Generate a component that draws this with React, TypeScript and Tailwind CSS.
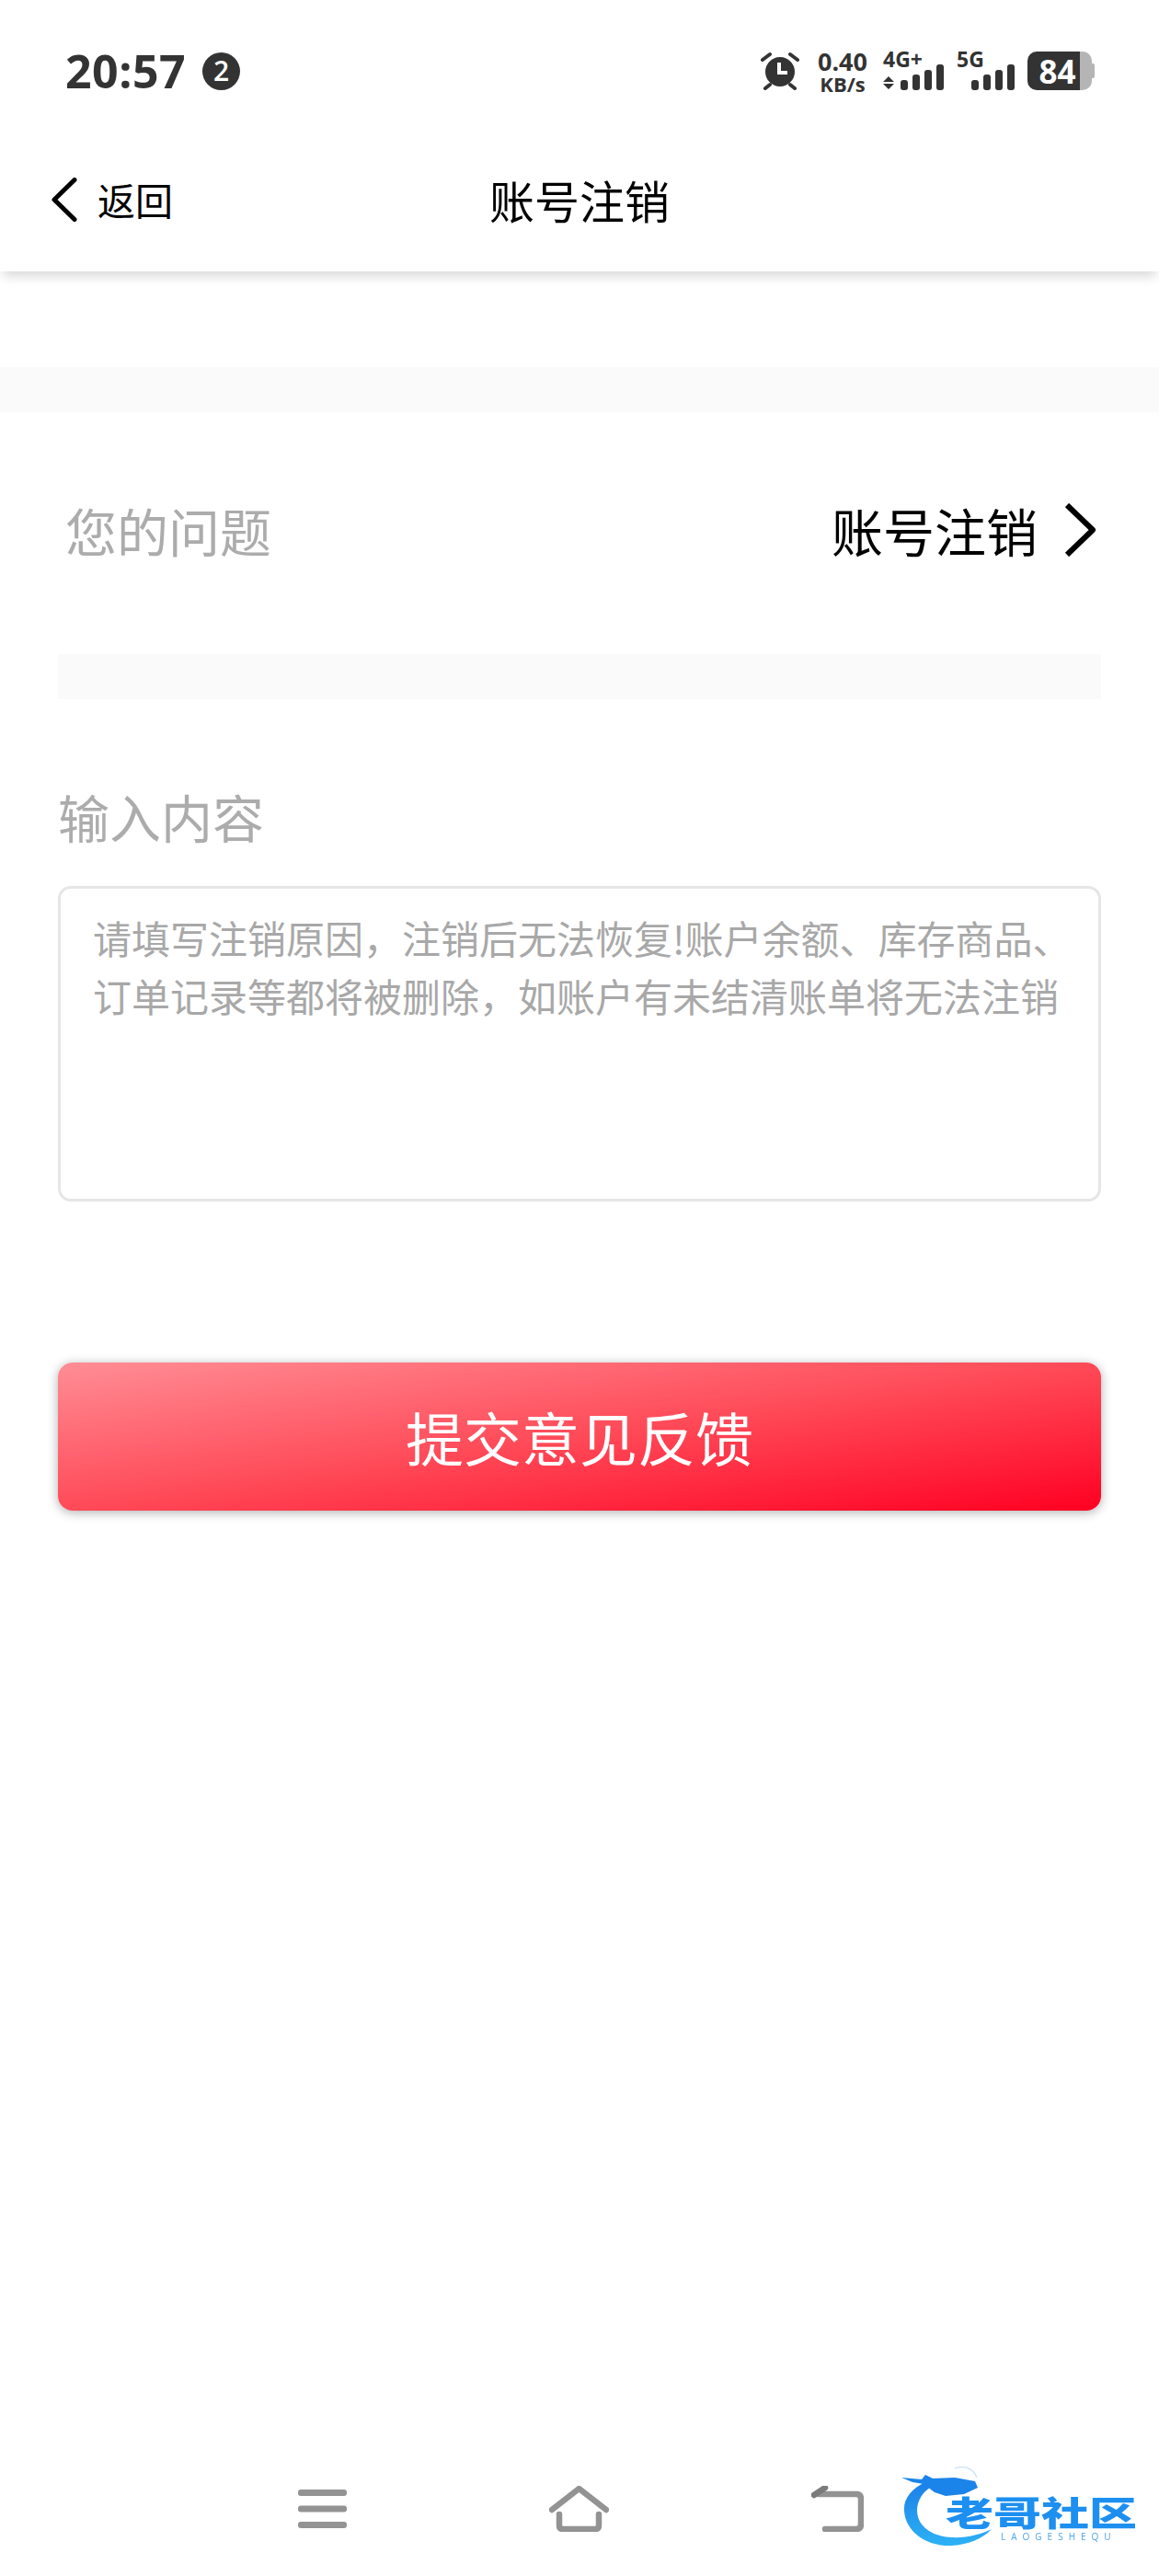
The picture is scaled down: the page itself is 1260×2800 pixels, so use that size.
const cjk = "font-['Noto_Sans_CJK_SC','Noto_Sans',sans-serif]";
const ui = "font-['Open_Sans','Noto_Sans',sans-serif]";

const AlarmIcon = () => (
  <svg width="44" height="42" viewBox="0 0 44 42" fill="none">
    <circle cx="22" cy="22" r="16" fill="#333" />
    <path d="M21 12v11h9" stroke="#fff" strokeWidth="4" />
    <path d="M3 9l8-6M41 9l-8-6M6 40l5-4M38 40l-5-4" stroke="#333" strokeWidth="4" strokeLinecap="round" />
  </svg>
);

const SignalBars = () => (
  <svg width="47" height="28" viewBox="0 0 47 28" fill="#333">
    <rect x="0" y="17" width="8" height="11" rx="3" />
    <rect x="13" y="11" width="8" height="17" rx="3" />
    <rect x="26" y="6" width="8" height="22" rx="3" />
    <rect x="39" y="0" width="8" height="28" rx="3" />
  </svg>
);

const ChevronLeft = () => (
  <svg width="28" height="48" viewBox="0 0 28 48" fill="none">
    <path d="M25 2.5L3 24l22 21.5" stroke="#000" strokeWidth="5" strokeLinecap="round" strokeLinejoin="round" />
  </svg>
);

const ChevronRight = () => (
  <svg width="36" height="58" viewBox="0 0 36 58" fill="none">
    <path d="M4 2l28 27L4 56" stroke="#000" strokeWidth="6" strokeLinejoin="round" />
  </svg>
);

const StatusBar = () => (
  <div className={`flex h-[154px] items-center justify-between pr-[70px] pl-[71px] text-[#333] ${ui}`}>
    <div className="flex items-center gap-[18px]">
      <span className="text-[50px] leading-none font-bold tracking-[0.5px]">20:57</span>
      <span className="flex h-[41px] w-[41px] items-center justify-center rounded-full bg-[#333] text-[30px] leading-none font-semibold text-white">
        2
      </span>
    </div>
    <div className="flex items-center">
      <AlarmIcon />
      <div className="ml-[16px] flex w-[60px] flex-col items-center font-bold">
        <span className="text-[27px] leading-[27px]">0.40</span>
        <span className="text-[22px] leading-[22px]">KB/s</span>
      </div>
      <div className="relative ml-[14px] flex h-[42px] w-[66px] items-end gap-[7px]">
        <span className="absolute top-[-1px] left-0 text-[23px] leading-[18px] font-bold">4G+</span>
        <svg width="12" height="14" viewBox="0 0 12 14" fill="#333" className="mb-[1px]">
          <path d="M6 0l6 6H0zM6 14L0 8h12z" />
        </svg>
        <SignalBars />
      </div>
      <div className="relative ml-[14px] flex h-[42px] w-[63px] items-end justify-end">
        <span className="absolute top-[-1px] left-0 text-[23px] leading-[18px] font-bold">5G</span>
        <SignalBars />
      </div>
      <div className="ml-[14px] flex items-center">
        <span className="flex h-[42px] w-[57px] items-center justify-center rounded-l-[10px] bg-[#333] pl-[8px] text-[35px] leading-none font-bold text-white">
          84
        </span>
        <div className="h-[42px] w-[13px] rounded-r-[10px] bg-[#b5b5b5]" />
        <div className="h-[16px] w-[3px] rounded-r-[2px] bg-[#b5b5b5]" />
      </div>
    </div>
  </div>
);

const NavBar = () => (
  <div className={`relative z-10 grid h-[141px] grid-cols-3 items-center bg-white pr-[56px] pb-[16px] pl-[56px] shadow-[0_9px_12px_-4px_rgba(0,0,0,0.16)] ${cjk}`}>
    <div className="flex items-center gap-[22px] text-[41px] leading-none text-black">
      <ChevronLeft />
      <span>返回</span>
    </div>
    <div className="w-full text-center text-[49px] leading-none text-black">账号注销</div>
    <div />
  </div>
);

const MenuIcon = () => (
  <svg width="53" height="50" viewBox="0 0 53 50" fill="#939393">
    <rect x="0" y="4" width="53" height="7" rx="3" />
    <rect x="0" y="21.5" width="53" height="7" rx="3" />
    <rect x="0" y="39" width="53" height="7" rx="3" />
  </svg>
);

const HomeIcon = () => (
  <svg width="65" height="50" viewBox="0 0 65 50" fill="none" stroke="#939393" strokeWidth="6.5" strokeLinecap="round" strokeLinejoin="round">
    <path d="M3 26L32.5 3 62 26" />
    <path d="M11 31v12q0 4 4 4h35q4 0 4-4V31" />
  </svg>
);

const BackIcon = () => (
  <svg width="57" height="50" viewBox="0 0 57 50" fill="none" strokeWidth="6.5" strokeLinecap="round" strokeLinejoin="round">
    <path d="M8 9h41q5 0 5 5v28q0 5-5 5H15" stroke="#939393" />
    <path d="M3 10l12-8" stroke="#7b7b7b" />
  </svg>
);

const Watermark = () => (
  <div className="absolute right-[22px] bottom-[27px] h-[100px] w-[260px] blur-[0.6px]">
    <svg width="112" height="100" viewBox="0 0 112 100" fill="none" className="absolute top-0 left-0">
      <defs>
        <linearGradient id="ring" x1="0" y1="0" x2="0" y2="1">
          <stop offset="0" stopColor="#1b7ee8" />
          <stop offset="1" stopColor="#2db2f5" />
        </linearGradient>
      </defs>
      <path
        d="M30 24C12 32 4 44 5 56C6 78 28 95 56 94C74 93 90 87 100 76C88 82 72 86 56 85C34 84 19 72 19 56C19 44 26 34 38 28Z"
        fill="url(#ring)"
      />
      <path d="M2 20L24 22L28 17L36 21L60 20L82 24L85 31L70 38L50 40L38 36L26 27L14 25Z" fill="#1b84ea" />
      <path d="M60 10C70 6 80 10 84 20" stroke="#cfe6f8" strokeWidth="1.5" />
    </svg>
    <span className={`absolute top-[35px] left-[50px] origin-center scale-y-[0.72] text-[52px] leading-[44px] font-black whitespace-nowrap text-[#1d8ff0] ${cjk}`}>
      老哥社区
    </span>
    <span className={`absolute top-[79px] left-[110px] text-[10px] leading-[10px] tracking-[6px] text-[#4da5ea] ${ui}`}>LAOGESHEQU</span>
  </div>
);

const BottomNav = () => (
  <div className="relative mt-auto flex h-[140px] items-start gap-[220px] pt-[42px] pl-[324px]">
    <MenuIcon />
    <HomeIcon />
    <BackIcon />
    <Watermark />
  </div>
);

export default function App() {
  return (
    <div className={`flex h-[2800px] w-[1260px] flex-col bg-white ${cjk}`}>
      <StatusBar />
      <NavBar />
      <div className="mt-[104px] h-[49px] bg-[#fafafa]" />

      <div className="flex h-[263px] items-center justify-between pr-[68px] pb-[7px] pl-[71px]">
        <span className="text-[56px] leading-none text-[#acacac]">您的问题</span>
        <div className="flex items-center gap-[28px]">
          <span className="text-[56px] leading-none text-black">账号注销</span>
          <ChevronRight />
        </div>
      </div>

      <div className="mx-[63px] h-[49px] bg-[#fafafa]" />

      <div className="px-[63px]">
        <div className="mt-[97px] mb-[46px] h-[60px] text-[56px] leading-[60px] text-[#acacac]">输入内容</div>
        <div className="h-[343px] rounded-[14px] border-[3px] border-[#e6e6e6] pt-[21px] pl-[35px] text-[42px] leading-[63px] whitespace-nowrap text-[#a8a8a8]">
          请填写注销原因，注销后无法恢复!账户余额、库存商品、
          <br />
          订单记录等都将被删除，如账户有未结清账单将无法注销
        </div>
        <button className="mt-[175px] flex h-[161px] w-full items-center justify-center rounded-[16px] bg-[linear-gradient(172deg,#ff8d95_0%,#ff4a58_50%,#ff0022_100%)] pb-[3px] text-[63px] leading-none text-white shadow-[0_2px_12px_rgba(0,0,0,0.32)]">
          提交意见反馈
        </button>
      </div>

      <BottomNav />
    </div>
  );
}
